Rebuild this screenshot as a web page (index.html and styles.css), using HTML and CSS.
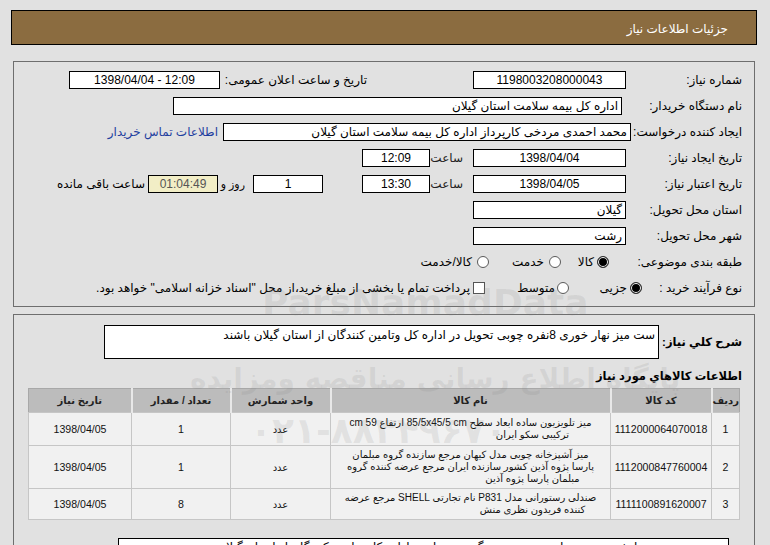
FILE: index.html
```html
<!DOCTYPE html>
<html lang="fa" dir="rtl">
<head>
<meta charset="utf-8">
<title>جزئیات اطلاعات نیاز</title>
<link rel="stylesheet" href="styles.css">
</head>
<body>
<div class="titlebar">جزئیات اطلاعات نیاز</div>

<div class="panel info">
  <div class="row">
    <span class="lbl">شماره نیاز:</span>
    <span class="box w153 c">1198003208000043</span>
    <span class="lbl2">تاریخ و ساعت اعلان عمومی:</span>
    <span class="box w151 c" dir="ltr">1398/04/04 - 12:09</span>
  </div>
  <div class="row">
    <span class="lbl l120">نام دستگاه خریدار:</span>
    <span class="box w449">اداره کل بیمه سلامت استان گیلان</span>
  </div>
  <div class="row">
    <span class="lbl l111">ایجاد کننده درخواست:</span>
    <span class="box w408">محمد احمدی مردخی کارپرداز اداره کل بیمه سلامت استان گیلان</span>
    <a class="link" href="#">اطلاعات تماس خریدار</a>
  </div>
  <div class="row">
    <span class="lbl">تاریخ ایجاد نیاز:</span>
    <span class="box w153 c">1398/04/04</span>
    <span class="txt saat">ساعت</span>
    <span class="box w68 c">12:09</span>
  </div>
  <div class="row">
    <span class="lbl">تاریخ اعتبار نیاز:</span>
    <span class="box w153 c">1398/04/05</span>
    <span class="txt saat">ساعت</span>
    <span class="box w68 c">13:30</span>
    <span class="box w70 c days">1</span>
    <span class="txt ruz">روز و</span>
    <span class="box w70 c remain">01:04:49</span>
    <span class="txt baghi">ساعت باقی مانده</span>
  </div>
  <div class="row">
    <span class="lbl">استان محل تحویل:</span>
    <span class="box w153">گیلان</span>
  </div>
  <div class="row">
    <span class="lbl">شهر محل تحویل:</span>
    <span class="box w153">رشت</span>
  </div>
  <div class="row">
    <span class="lbl l133">طبقه بندی موضوعی:</span>
    <span class="radio on"></span>
    <span class="txt opt1">کالا</span>
    <span class="radio"></span>
    <span class="txt opt2">خدمت</span>
    <span class="radio"></span>
    <span class="txt opt3">کالا/خدمت</span>
  </div>
  <div class="row">
    <span class="lbl l95">نوع فرآیند خرید :</span>
    <span class="radio on r5"></span>
    <span class="txt opt4">جزیی</span>
    <span class="radio"></span>
    <span class="txt opt5">متوسط</span>
    <span class="check"></span>
    <span class="txt opt6">پرداخت تمام یا بخشی از مبلغ خرید،از محل "اسناد خزانه اسلامی" خواهد بود.</span>
  </div>
</div>

<div class="panel goods">
  <div class="descrow">
    <span class="blbl">شرح کلي نياز:</span>
    <div class="descbox">ست میز نهار خوری 8نفره چوبی تحویل در اداره کل وتامین کنندگان از استان گیلان باشند</div>
  </div>
  <div class="heading">اطلاعات کالاهاي مورد نياز</div>
  <table class="items">
    <colgroup>
      <col class="c1"><col class="c2"><col class="c3"><col class="c4"><col class="c5"><col class="c6">
    </colgroup>
    <thead>
      <tr><th>ردیف</th><th>کد کالا</th><th>نام کالا</th><th>واحد شمارش</th><th>تعداد / مقدار</th><th>تاریخ نیاز</th></tr>
    </thead>
    <tbody>
      <tr class="h33">
        <td class="num">1</td><td class="num">1112000064070018</td>
        <td class="name"><span class="ln">میز تلویزیون ساده ابعاد سطح 85/5x45/5 cm ارتفاع 59 cm</span><span class="ln last">ترکیبی سکو ایران</span></td>
        <td class="unit">عدد</td><td class="num">1</td><td class="num">1398/04/05</td>
      </tr>
      <tr class="h43">
        <td class="num">2</td><td class="num">1112000847760004</td>
        <td class="name"><span class="ln">میز آشپزخانه چوبی مدل کیهان مرجع سازنده گروه مبلمان</span><span class="ln">پارسا پژوه آذین کشور سازنده ایران مرجع عرضه کننده گروه</span><span class="ln last">مبلمان پارسا پژوه آذین</span></td>
        <td class="unit">عدد</td><td class="num">1</td><td class="num">1398/04/05</td>
      </tr>
      <tr class="h31">
        <td class="num">3</td><td class="num">1111100891620007</td>
        <td class="name"><span class="ln">صندلی رستورانی مدل P831 نام تجارتی SHELL مرجع عرضه</span><span class="ln last">کننده فریدون نظری منش</span></td>
        <td class="unit">عدد</td><td class="num">8</td><td class="num">1398/04/05</td>
      </tr>
    </tbody>
  </table>
  <div class="notebox">تصویر ست میز نهارخوری و میز تلویزیون پیوست گردد تحویل در اداره کل وتامین کنندگان از استان گیلان</div>
</div>

<div class="wm wm1" dir="ltr">ParsNamadData</div>
<div class="wm wm2">پایگاه اطلاع رسانی مناقصه ومزایده</div>
<div class="wm wm3" dir="ltr">۰۲۱-۸۸۳۴۹۶۷۰</div>
</body>
</html>
```

FILE: styles.css
```css
* { box-sizing: border-box; }
html, body { margin: 0; padding: 0; }
body {
  width: 770px;
  height: 545px;
  overflow: hidden;
  position: relative;
  background: #e1e1e1;
  font-family: "Liberation Sans", "DejaVu Sans", sans-serif;
  font-size: 12px;
  color: #000;
}

.titlebar {
  margin: 10px 13px 0 11px;
  height: 35px;
  background: #8b6c40;
  border: 1px solid #000;
  color: #fff;
  font-size: 12px;
  line-height: 37px;
  padding-right: 28px;
}

.panel {
  margin: 0 15px 0 13px;
  border: 1px solid #6e6e6e;
}
.info {
  margin-top: 16px;
  height: 246px;
  padding: 5px 12px 0 0;
}
.row {
  display: flex;
  align-items: center;
  height: 26px;
  white-space: nowrap;
}
.lbl { flex: none; width: 116px; }
.l120 { width: 120px; }
.l111 { width: 111px; }
.l133 { width: 133px; }
.l95 { width: 95px; }
.lbl2 { flex: none; width: 147px; margin-right: 106px; }

.box {
  display: block;
  flex: none;
  height: 18px;
  line-height: 16px;
  border: 1px solid #000;
  background: #fff;
  padding: 0 3px;
  overflow: hidden;
}
.c { text-align: center; }
.w153 { width: 153px; }
.w151 { width: 151px; }
.w449 { width: 449px; }
.w408 { width: 408px; }
.w68 { width: 68px; }
.w70 { width: 70px; }
.days { margin-right: 39px; }
.remain { background: #f2eec6; color: #555; }

.txt { flex: none; }
.saat { width: 33px; margin-right: 10px; color: #222; }
.ruz { width: 27px; margin-right: 8px; font-size: 11px; }
.baghi { margin-right: 3px; }

.link {
  flex: none;
  margin-right: 5px;
  color: #1f3f9f;
  text-decoration: none;
}

.radio {
  flex: none;
  display: block;
  width: 12px;
  height: 12px;
  border-radius: 50%;
  border: 1px solid #5a5a5a;
  background: #fff;
}
.radio.on {
  background: #000;
  border-color: #333;
  box-shadow: inset 0 0 0 1px #fff;
}
.r5 { margin-right: 5px; }
.opt1 { width: 33px; margin-right: 3px; }
.opt2 { width: 55px; margin-right: 5px; }
.opt3 { margin-right: 5px; }
.opt4 { width: 58px; margin-right: 3px; }
.opt5 { width: 70px; margin-right: 2px; }
.opt6 { margin-right: 3px; }
.check {
  flex: none;
  display: block;
  width: 12px;
  height: 12px;
  border: 1px solid #555;
  background: #fff;
}

.goods {
  margin-top: 7px;
  height: 260px;
  padding: 10px 12px 0 0;
}
.descrow {
  display: flex;
  align-items: center;
}
.blbl {
  flex: none;
  width: 83px;
  white-space: nowrap;
  font-weight: bold;
  font-size: 11.5px;
}
.descbox {
  flex: none;
  width: 555px;
  height: 34px;
  border: 1px solid #000;
  background: #fff;
  padding: 2px 3px;
  font-size: 12px;
  line-height: 14px;
}
.heading {
  margin-top: 9px;
  height: 16px;
  line-height: 16px;
  font-weight: bold;
  font-size: 11.5px;
}
.items {
  margin: 4px 2px 0 0;
  width: 711px;
  table-layout: fixed;
  border-collapse: collapse;
  border: 1px solid #a8a8a8;
  font-size: 10px;
}
.c1 { width: 28px; }
.c2 { width: 101px; }
.c3 { width: 280px; }
.c4 { width: 100px; }
.c5 { width: 99px; }
.c6 { width: 103px; }
.items th {
  height: 24px;
  background: #bcbcbc;
  border-left: 2px solid #e8e8e8;
  font-weight: bold;
  color: #222;
  padding: 0;
}
.items th:last-child { border-left: 0; }
.items td {
  background: #f1f1f1;
  border: 1px solid #c6c6c6;
  text-align: center;
  padding: 0;
  color: #111;
}
.items td.num { font-size: 10.6px; }
.h33 td { height: 33px; }
.h43 td { height: 43px; }
.h31 td { height: 31px; }
.items td.name { line-height: 12px; }
.ln { display: block; white-space: nowrap; }
.ln.last { padding-left: 124px; }
.unit { color: #444; }

.notebox {
  margin: 18px 13px 0 0;
  width: 611px;
  height: 30px;
  border: 1px solid #000;
  background: #fff;
  padding: 1px 3px;
  font-size: 12px;
  line-height: 15px;
  white-space: nowrap;
  overflow: hidden;
}

.wm {
  position: absolute;
  pointer-events: none;
  white-space: nowrap;
  color: rgba(120, 120, 120, 0.13);
  font-weight: bold;
  font-family: "DejaVu Sans", sans-serif;
}
.wm1 { left: 262px; top: 282px; font-size: 36px; }
.wm2 { left: 190px; top: 362px; font-size: 28px; }
.wm3 { left: 250px; top: 410px; font-size: 36px; }
```
